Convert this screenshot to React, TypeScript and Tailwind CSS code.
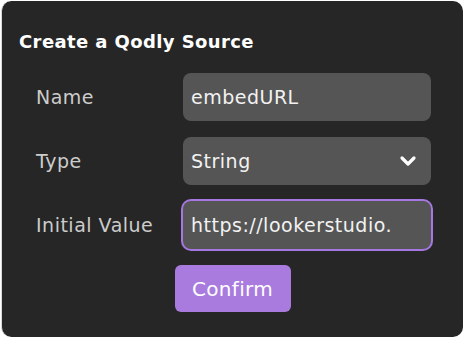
import React from 'react';
import { ChevronDown } from 'lucide-react';

const font = { fontFamily: '"DejaVu Sans", Inter, sans-serif' };

export default function App() {
  return (
    <div className="w-[464px] h-[337px] bg-white pl-[1px] pt-[1px]" style={font}>
      <div className="w-[462px] h-[336px] bg-[#262626] rounded-[10px] border-l border-[#d9d9d9] flex flex-col pt-[27px]">
        {/* Title */}
        <h2 className="pl-[17px] text-[18px] leading-[28px] font-bold text-white tracking-[0.4px]">
          Create a Qodly Source
        </h2>

        {/* Form rows */}
        <div className="mt-[17px] pl-[34px] grid grid-cols-[147px_248px] gap-y-[16px] items-center">
          <label className="text-[19px] text-[#cccccc] tracking-[0.5px]">Name</label>
          <input
            readOnly
            value="embedURL"
            className="h-[48px] rounded-lg bg-[#555555] px-[8px] text-[19px] text-[#f2f2f2] outline-none tracking-[0.5px]"
            style={font}
          />

          <label className="text-[19px] text-[#cccccc] tracking-[0.5px]">Type</label>
          <div className="h-[48px] rounded-lg bg-[#555555] pl-[8px] pr-[11px] flex items-center justify-between text-[19px] text-[#f2f2f2] tracking-[0.5px]">
            <span>String</span>
            <ChevronDown size={24} strokeWidth={3.2} className="text-white" />
          </div>

          <label className="text-[19px] text-[#cccccc] tracking-[0.5px]">Initial Value</label>
          <input
            readOnly
            value="https://lookerstudio.google.com/embed/reporting"
            className="h-[48px] rounded-lg bg-[#555555] pl-[8px] pr-[39px] text-[19px] text-[#f2f2f2] outline-none ring-2 ring-[#a577e0] tracking-[0.5px]"
            style={font}
          />
        </div>

        {/* Confirm */}
        <div className="mt-[16px] flex justify-center">
          <button className="w-[116px] h-[47px] rounded-md bg-[#a97bdf] text-white text-[20px] tracking-[0.3px]">
            Confirm
          </button>
        </div>
      </div>
    </div>
  );
}
